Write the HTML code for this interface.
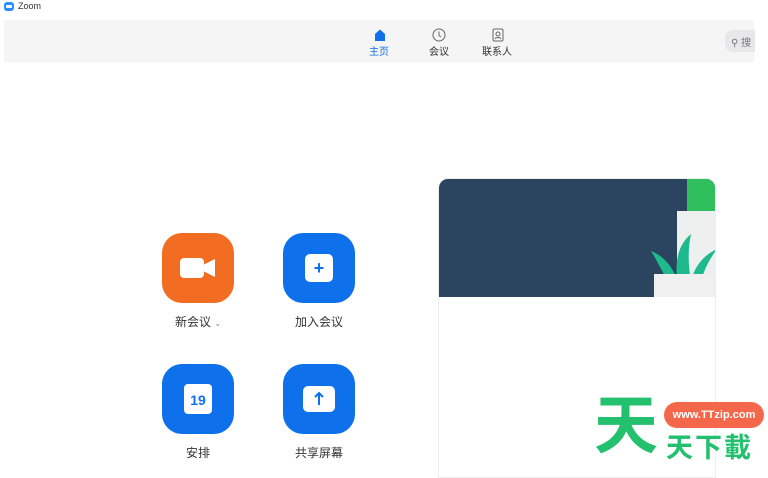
<!DOCTYPE html>
<html><head><meta charset="utf-8"><style>
*{margin:0;padding:0;box-sizing:border-box}
body{width:768px;height:471px;overflow:hidden;background:#fff;font-family:"Liberation Sans","Noto Sans CJK SC",sans-serif;position:relative}
.a{position:absolute}
.btn{position:absolute;width:72px;height:70px;border-radius:20px;background:#0e71eb}
.lbl{position:absolute;font-size:12px;color:#333;width:120px;text-align:center}
</style></head><body>
<div class="a" style="left:4px;top:2px;width:10px;height:9px;border-radius:3px;background:#2d8cff"></div>
<div class="a" style="left:6px;top:5px;width:6px;height:3px;background:#fff;border-radius:1px"></div>
<div class="a" style="left:18px;top:1px;font-size:9px;color:#333">Zoom</div>
<div class="a" style="left:4px;top:20px;width:750px;height:42px;background:#f5f5f6"></div>
<svg class="a" style="left:373px;top:28px" width="14" height="14" viewBox="0 0 14 14"><path d="M2 6 L7 1.5 L12 6 V13 H2Z" fill="#0e71eb"/></svg>
<div class="a" style="left:369px;top:43px;font-size:10px;color:#0e71eb">主页</div>
<svg class="a" style="left:432px;top:28px" width="14" height="14"><circle cx="7" cy="7" r="6" fill="none" stroke="#666" stroke-width="1"/><path d="M7 3.5V7.5L9 9" fill="none" stroke="#666"/></svg>
<div class="a" style="left:429px;top:43px;font-size:10px;color:#333">会议</div>
<svg class="a" style="left:491px;top:28px" width="14" height="14"><rect x="2" y="1" width="10" height="12" rx="1.5" fill="none" stroke="#666"/><circle cx="7" cy="6" r="2" fill="none" stroke="#666"/><path d="M4 11c1-2 5-2 6 0" fill="none" stroke="#666"/></svg>
<div class="a" style="left:482px;top:43px;font-size:10px;color:#333">联系人</div>
<div class="a" style="left:725px;top:30px;width:30px;height:22px;border-radius:8px 0 0 8px;background:#e8e8ea"></div>
<div class="a" style="left:731px;top:34px;font-size:10px;color:#777">⚲ 搜</div>

<div class="btn" style="left:162px;top:233px;background:#f26d21"></div>
<div class="a" style="left:180px;top:258px;width:24px;height:20px;background:#fff;border-radius:4px"></div>
<svg class="a" style="left:203px;top:258px" width="14" height="20"><path d="M0 7 L12 1 V19 L0 13Z" fill="#fff"/></svg>
<div class="lbl" style="left:138px;top:313px">新会议 <span style="font-size:8px;color:#888">⌄</span></div>
<div class="btn" style="left:283px;top:233px"></div>
<div class="a" style="left:305px;top:254px;width:28px;height:28px;background:#fff;border-radius:5px"></div>
<div class="a" style="left:305px;top:254px;width:28px;line-height:28px;text-align:center;font-size:18px;font-weight:bold;color:#0e71eb">+</div>
<div class="lbl" style="left:259px;top:313px">加入会议</div>
<div class="btn" style="left:162px;top:364px"></div>
<div class="a" style="left:184px;top:384px;width:28px;height:30px;background:#fff;border-radius:4px"></div>
<div class="a" style="left:184px;top:392px;width:28px;text-align:center;font-size:14px;font-weight:bold;color:#0e71eb">19</div>
<div class="lbl" style="left:138px;top:444px">安排</div>
<div class="btn" style="left:283px;top:364px"></div>
<div class="a" style="left:303px;top:386px;width:32px;height:26px;background:#fff;border-radius:5px"></div>
<svg class="a" style="left:313px;top:391px" width="12" height="16"><path d="M6 14V2M2 6L6 2L10 6" fill="none" stroke="#0e71eb" stroke-width="2"/></svg>
<div class="lbl" style="left:259px;top:444px">共享屏幕</div>

<div class="a" style="left:438px;top:178px;width:278px;height:300px;border:1px solid #eee;border-radius:10px 10px 0 0;overflow:hidden">
<div class="a" style="left:0;top:0;width:278px;height:118px;background:#2b4460"></div>
<div class="a" style="left:248px;top:0;width:30px;height:35px;background:#2fbf5c"></div>
<div class="a" style="left:238px;top:32px;width:40px;height:86px;background:#eef0f0"></div>
<svg class="a" style="left:212px;top:50px" width="66" height="60"><path d="M20 58C10 40 5 30 0 22C15 28 22 40 26 50C24 30 28 15 40 5C36 25 38 40 40 52C44 35 55 25 66 20C55 35 50 48 50 58Z" fill="#1fb98e"/></svg>
<div class="a" style="left:215px;top:95px;width:63px;height:23px;background:#f0f0f0"></div>
</div>
<div class="a" style="left:594px;top:394px;font-size:64px;font-weight:bold;color:#23c06d;line-height:1">天</div>
<div class="a" style="left:664px;top:402px;width:100px;height:26px;border-radius:13px;background:#f4674a;color:#fff;font-size:11px;font-weight:bold;line-height:26px;text-align:center">www.TTzip.com</div>
<div class="a" style="left:666px;top:435px;font-size:27px;font-weight:bold;color:#23c06d;line-height:1;letter-spacing:2px">天下載</div>
</body></html>
